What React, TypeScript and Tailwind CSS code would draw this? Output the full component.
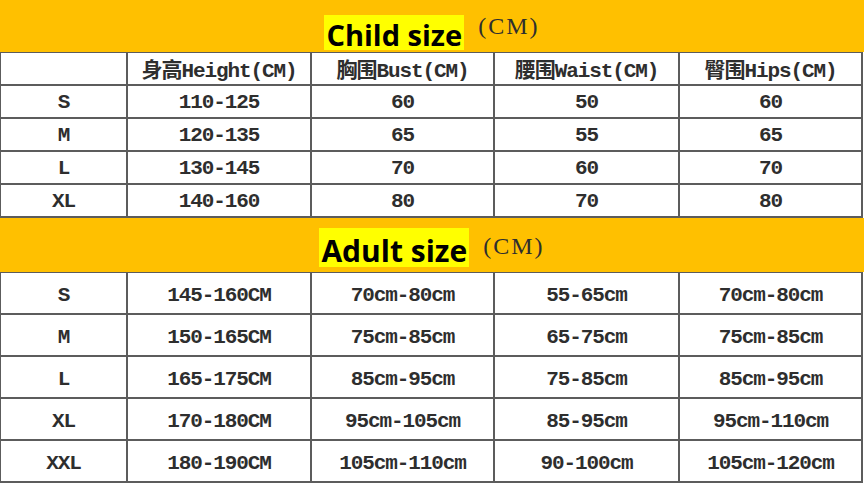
import React from "react";

const cell = "flex items-center justify-center bg-white text-[#2e2e2e] font-bold text-[21px] leading-none font-['Liberation_Mono','Noto_Sans_CJK_SC',monospace] tracking-[-1.1px]";

const childHead = ["", "身高Height(CM)", "胸围Bust(CM)", "腰围Waist(CM)", "臀围Hips(CM)"];

const childRows = [
  ["S", "110-125", "60", "50", "60"],
  ["M", "120-135", "65", "55", "65"],
  ["L", "130-145", "70", "60", "70"],
  ["XL", "140-160", "80", "70", "80"],
];

const adultRows = [
  ["S", "145-160CM", "70cm-80cm", "55-65cm", "70cm-80cm"],
  ["M", "150-165CM", "75cm-85cm", "65-75cm", "75cm-85cm"],
  ["L", "165-175CM", "85cm-95cm", "75-85cm", "85cm-95cm"],
  ["XL", "170-180CM", "95cm-105cm", "85-95cm", "95cm-110cm"],
  ["XXL", "180-190CM", "105cm-110cm", "90-100cm", "105cm-120cm"],
];

function Banner({ title, big }: { title: string; big?: boolean }) {
  return (
    <div className={`flex items-end justify-center bg-[#ffc000] ${big ? "h-[54px] pb-[5px]" : "h-[52px] pb-[2px]"}`}>
      <div
        className={`bg-[#ffff00] text-black font-bold font-['Open_Sans','Lato',sans-serif] leading-none flex items-end ${
          big ? "h-[39px] px-[2px] pb-[1px] text-[30px]" : "h-[35px] px-[2px] pb-[1px] text-[29px]"
        }`}
      >
        {title}
      </div>
      <div
        className={`ml-[14px] text-[#2e2e2e] text-[24px] leading-none tracking-[2px] font-['Liberation_Serif',serif] ${
          big ? "mb-[9px]" : "mb-[12px]"
        }`}
      >
        (CM)
      </div>
    </div>
  );
}

export default function App() {
  return (
    <div className="w-[864px] h-[484px] bg-white overflow-hidden">
      <Banner title="Child size" />
      <div className="grid grid-cols-[125px_182px_181px_183px_181px] auto-rows-[31px] gap-[2px] bg-[#5c5c5c] pt-[1px] pb-[2px] pl-[1px] pr-[2px] w-[863px]">
        {childHead.map((h, i) => (
          <div key={i} className={`${cell} pt-[5px]`}>
            {h}
          </div>
        ))}
        {childRows.map((r) =>
          r.map((v, i) => (
            <div key={r[0] + i} className={`${cell} pt-[2px]`}>
              {v}
            </div>
          ))
        )}
      </div>
      <Banner title="Adult size" big />
      <div className="grid grid-cols-[125px_182px_181px_183px_181px] auto-rows-[40px] gap-[2px] bg-[#5c5c5c] pt-[1px] pb-[2px] pl-[1px] pr-[2px] w-[863px]">
        {adultRows.map((r) =>
          r.map((v, i) => (
            <div key={r[0] + i} className={`${cell} pt-[4px]`}>
              {v}
            </div>
          ))
        )}
      </div>
    </div>
  );
}
